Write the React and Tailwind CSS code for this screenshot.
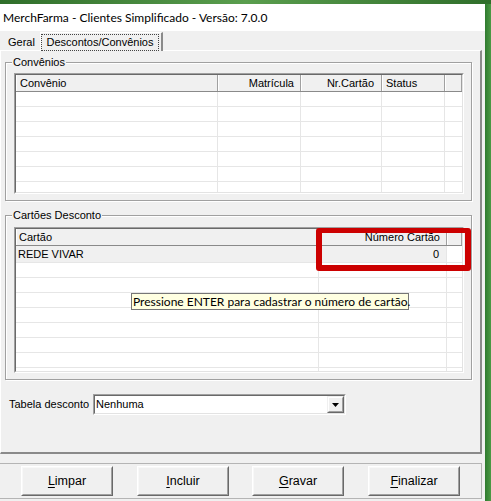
import React from "react";

const ROW_LINE = "border-[#e6e6e6]";

// Two-level sunken frame, like a classic Win32 list control
function Sunken({ className = "", children }) {
  return (
    <div
      className={`border border-t-[#a0a0a0] border-l-[#a0a0a0] border-r-white border-b-white ${className}`}
    >
      <div className="h-full w-full border border-t-[#696969] border-l-[#696969] border-r-[#e3e3e3] border-b-[#e3e3e3] bg-white overflow-hidden">
        {children}
      </div>
    </div>
  );
}

function GroupBox({ label, className = "", children }) {
  return (
    <div
      className={`ml-[4px] w-[467px] border border-[#a0a0a0] shadow-[inset_1px_1px_0_#fff,1px_1px_0_#fff] flex flex-col ${className}`}
    >
      <span className="self-start -mt-[7px] ml-[6px] px-[1px] bg-[#f0f0f0] text-[11px] leading-[13px]">
        {label}
      </span>
      {children}
    </div>
  );
}

function HeaderRow({ cols, height }) {
  return (
    <div className={`${height} flex bg-[#f0f0f0] border-b border-[#8a8a8a] shrink-0`}>
      {cols.map((c, i) => (
        <div
          key={i}
          className={`${c.w} shrink-0 h-full flex items-center text-[11px] leading-none border-r border-[#a0a0a0] shadow-[inset_1px_0_0_#fff] ${c.align || ""}`}
        >
          {c.label}
        </div>
      ))}
    </div>
  );
}

function EmptyRow({ cols, height = "h-[15px]" }) {
  return (
    <div className={`${height} flex border-b ${ROW_LINE} shrink-0`}>
      {cols.map((c, i) => (
        <div
          key={i}
          className={`${c.w} shrink-0 h-full ${i < cols.length - 1 ? `border-r ${ROW_LINE}` : ""}`}
        />
      ))}
    </div>
  );
}

const convenioCols = [
  { w: "w-[202px]", label: "Convênio", align: "justify-start pl-[4px]" },
  { w: "w-[83px]", label: "Matrícula", align: "justify-end pr-[6px]" },
  { w: "w-[81px]", label: "Nr.Cartão", align: "justify-end pr-[7px]" },
  { w: "w-[63px]", label: "Status", align: "justify-start pl-[4px]" },
  { w: "flex-1", label: "" },
];

const cartaoCols = [
  { w: "w-[303px]", label: "Cartão", align: "justify-start pl-[3px]" },
  { w: "w-[128px]", label: "Número Cartão", align: "justify-end pr-[6px]" },
  { w: "flex-1", label: "" },
];

function WinButton({ accel, rest, className = "" }) {
  return (
    <div
      className={`w-[92px] h-[30px] border border-t-white border-l-white border-r-[#696969] border-b-[#696969] ${className}`}
    >
      <div className="h-full w-full border border-t-[#f8f8f8] border-l-[#f8f8f8] border-r-[#a0a0a0] border-b-[#a0a0a0] bg-[#f0f0f0] flex items-center justify-center text-[12.5px] leading-none">
        <span>
          <span className="underline underline-offset-[2px]">{accel}</span>
          {rest}
        </span>
      </div>
    </div>
  );
}

export default function App() {
  return (
    <div className="relative w-[491px] h-[501px] flex flex-col bg-[#3b8236] overflow-hidden font-['Liberation_Sans',Arial,sans-serif] text-black">
      {/* window frame top */}
      <div className="h-[4px] shrink-0 bg-linear-to-r from-[#2f6e2a] via-[#5a9e4e] to-[#2f6e2a]" />
      <div className="flex flex-1 min-h-0">
        <div className="w-[485px] bg-[#f0f0f0] flex flex-col">
          {/* caption */}
          <div className="h-[27px] shrink-0 bg-white flex items-center pl-[3px] font-['Lato',sans-serif] text-[12px]">
            MerchFarma - Clientes Simplificado - Versão: 7.0.0
          </div>

          {/* tab strip */}
          <div className="h-[19px] shrink-0 flex items-end pl-[2px] text-[11px] leading-none">
            <div className="h-[16px] w-[38px] flex items-center pl-[6px]">Geral</div>
            <div className="relative z-10 -mb-[1px] w-[123px] h-[19px] border-t border-l border-white border-r-2 border-r-[#8a8a8a] bg-[#f0f0f0] pt-[1px] pr-[2px]">
              <div className="h-full border border-dotted border-[#444] flex items-center justify-center pb-[1px]">
                Descontos/Convênios
              </div>
            </div>
          </div>

          {/* tab page */}
          <div className="w-[482px] h-[404px] shrink-0 border-t border-l border-white border-r-2 border-b-2 border-r-[#8a8a8a] border-b-[#8a8a8a] flex flex-col">
            <GroupBox label="Convênios" className="mt-[11px] h-[139px]">
              <Sunken className="ml-[8px] mt-[4px] w-[450px] h-[121px]">
                <HeaderRow cols={convenioCols} height="h-[17px]" />
                {Array.from({ length: 7 }).map((_, i) => (
                  <EmptyRow key={i} cols={convenioCols} />
                ))}
              </Sunken>
            </GroupBox>

            <GroupBox label="Cartões Desconto" className="mt-[14px] h-[165px]">
              <Sunken className="ml-[8px] mt-[5px] w-[450px] h-[146px]">
                <HeaderRow cols={cartaoCols} height="h-[17px]" />
                <div className={`h-[17px] flex border-b ${ROW_LINE} shrink-0 text-[11px] leading-none`}>
                  <div className={`w-[303px] shrink-0 h-full bg-[#f0f0f0] flex items-center pl-[2px] border-r ${ROW_LINE}`}>
                    REDE VIVAR
                  </div>
                  <div className={`w-[128px] shrink-0 h-full bg-[#f0f0f0] flex items-center justify-end pr-[7px] border-r ${ROW_LINE}`}>
                    0
                  </div>
                  <div className="flex-1 h-full" />
                </div>
                {Array.from({ length: 8 }).map((_, i) => (
                  <EmptyRow key={i} cols={cartaoCols} />
                ))}
              </Sunken>
            </GroupBox>

            {/* discount table selector */}
            <div className="mt-[14px] flex items-center text-[11px] leading-none">
              <span className="ml-[8px] w-[84px]">Tabela desconto</span>
              <Sunken className="w-[253px] h-[21px]">
                <div className="h-full flex items-center justify-between pl-[1px] pr-[0px]">
                  <span>Nenhuma</span>
                  <div className="w-[17px] h-[17px] border border-t-[#f0f0f0] border-l-[#f0f0f0] border-r-[#696969] border-b-[#696969]">
                    <div className="h-full w-full border border-t-white border-l-white border-r-[#a0a0a0] border-b-[#a0a0a0] bg-[#f0f0f0] flex items-center justify-center">
                      <svg width="7" height="4" viewBox="0 0 7 4">
                        <path d="M0 0h7L3.5 4z" fill="#000" />
                      </svg>
                    </div>
                  </div>
                </div>
              </Sunken>
            </div>
          </div>

          {/* action buttons */}
          <div className="mt-[9px] w-[482px] h-[36px] shrink-0 border-t border-r border-b border-[#b4b4b4] flex items-center">
            <WinButton accel="L" rest="impar" className="ml-[21px]" />
            <WinButton accel="I" rest="ncluir" className="ml-[24px]" />
            <WinButton accel="G" rest="ravar" className="ml-[23px]" />
            <WinButton accel="F" rest="inalizar" className="ml-[24px]" />
          </div>
        </div>
        <div className="flex-1 bg-linear-to-r from-[#2f7a2f] to-[#4c9a45]" />
      </div>

      {/* highlight around the card number column */}
      <div className="absolute left-[316px] top-[228px] w-[155px] h-[43px] border-[6px] border-t-[5px] border-[#cc0000] rounded-[3px]" />

      {/* hint tooltip */}
      <div className="absolute left-[131px] top-[293px] w-[278px] h-[17px] border border-[#767676] bg-[#ffffe1] flex items-center pl-[1px] font-['Lato',sans-serif] text-[12px] leading-none whitespace-nowrap">
        Pressione ENTER para cadastrar o número de cartão.
      </div>
    </div>
  );
}
